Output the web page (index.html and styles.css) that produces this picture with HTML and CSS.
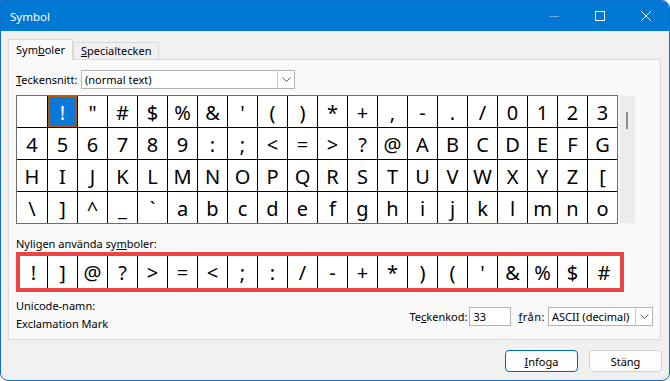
FILE: index.html
```html
<!DOCTYPE html>
<html lang="sv">

<head>
    <meta charset="UTF-8">
    <meta name="viewport" content="width=device-width, initial-scale=1.0">
    <title>Symbol</title>
    <link rel="stylesheet" href="styles.css">
</head>

<body>
    <div class="window">
        <div class="titlebar">
            <span class="title">Symbol</span>
            <div class="controls">
                <span class="ctrl">
                    <svg width="12" height="12" viewBox="0 0 12 12"><path d="M1 6.5 H11" stroke="#6fa9e4" stroke-width="1" /></svg>
                </span>
                <span class="ctrl">
                    <svg width="12" height="12" viewBox="0 0 12 12"><rect x="1.5" y="1.5" width="9" height="9" fill="none" stroke="#fff" stroke-width="1" /></svg>
                </span>
                <span class="ctrl">
                    <svg width="12" height="12" viewBox="0 0 12 12"><path d="M1 1 L11 11 M11 1 L1 11" stroke="#fff" stroke-width="1" /></svg>
                </span>
            </div>
        </div>

        <div class="content">
            <div class="tabs">
                <div class="tab active">Sym<u>b</u>oler</div>
                <div class="tab"><u>S</u>pecialtecken</div>
            </div>

            <div class="panel">
                <div class="font-row">
                    <span class="font-label"><u>T</u>eckensnitt:</span>
                    <div class="select font-select">
                        <span>(normal text)</span>
                        <span class="drop">
                            <svg width="9" height="6" viewBox="0 0 9 6"><path d="M0.5 0.5 L4.5 4.5 L8.5 0.5" fill="none" stroke="#606060" stroke-width="1" /></svg>
                        </span>
                    </div>
                </div>

                <div class="grid-row">
                    <div class="grid" id="grid"></div>
                    <div class="scrollbar">
                        <div class="thumb"></div>
                    </div>
                </div>

                <div class="recent-label">Nyligen använda sy<u>m</u>boler:</div>
                <div class="recent" id="recent"></div>

                <div class="info-row">
                    <div class="names">
                        <div>Unicode-namn:</div>
                        <div>Exclamation Mark</div>
                    </div>
                    <div class="code">
                        <span class="code-label">Te<u>c</u>kenkod:</span>
                        <div class="input">33</div>
                        <span class="from-label"><u>f</u>rån:</span>
                        <div class="select from-select">
                            <span>ASCII (decimal)</span>
                            <span class="drop">
                                <svg width="9" height="6" viewBox="0 0 9 6"><path d="M0.5 0.5 L4.5 4.5 L8.5 0.5" fill="none" stroke="#606060" stroke-width="1" /></svg>
                            </span>
                        </div>
                    </div>
                </div>
            </div>

            <div class="buttons">
                <button class="btn primary"><u>I</u>nfoga</button>
                <button class="btn">Stäng</button>
            </div>
        </div>
    </div>

    <script>
        const rows = [
            " !\"#$%&'()*+,-./0123",
            "456789:;<=>?@ABCDEFG",
            "HIJKLMNOPQRSTUVWXYZ[",
            "\\]^_`abcdefghijklmno"
        ];
        const recentChars = "!]@?>=<;:/-+*)('&%$#";

        const grid = document.getElementById("grid");
        const recent = document.getElementById("recent");

        const makeCell = (ch) => {
            let cell = document.createElement("div");
            cell.classList.add("cell");
            cell.textContent = ch;
            return cell;
        };

        rows.forEach((row, r) => {
            [...row].forEach((ch, c) => {
                let cell = makeCell(ch);
                if (r === 0 && c === 1) {
                    cell.classList.add("selected");
                }
                grid.appendChild(cell);
            });
        });

        [...recentChars].forEach((ch) => {
            recent.appendChild(makeCell(ch));
        });
    </script>
</body>

</html>
```

FILE: styles.css
```css
* {
    box-sizing: border-box;
}

body {
    margin: 0;
    font-family: "Noto Sans", sans-serif;
    font-size: 11px;
    color: #000;
    background-color: #fff;
}

u {
    text-underline-offset: 1px;
}

.window {
    width: 670px;
    height: 381px;
    border: 1px solid #0a6fce;
    border-radius: 0 8px 8px 8px;
    background-color: #f0f0f0;
    overflow: hidden;
    display: flex;
    flex-direction: column;
}

.titlebar {
    height: 30px;
    flex-shrink: 0;
    background-color: #0078d4;
    color: white;
    display: flex;
    align-items: center;
}

.title {
    padding-left: 9px;
    font-size: 11.5px;
}

.controls {
    margin-left: auto;
    display: flex;
    height: 100%;
}

.ctrl {
    width: 46px;
    display: flex;
    align-items: center;
    justify-content: center;
}

.content {
    padding: 8px 8px 0 7px;
    display: flex;
    flex-direction: column;
}

.tabs {
    display: flex;
    align-items: flex-end;
    height: 20px;
}

.tab {
    height: 17px;
    padding: 0 7px;
    line-height: 16px;
    border: 1px solid #d9d9d9;
    border-bottom: none;
    background-color: #f0f0f0;
}

.tab.active {
    height: 21px;
    margin-bottom: -1px;
    padding: 2px 7px 0 7px;
    background-color: #f9f9f9;
    position: relative;
    z-index: 1;
}

.panel {
    height: 281px;
    border: 1px solid #d9d9d9;
    background-color: #f9f9f9;
    padding: 10px 7px 0 7px;
}

.font-row {
    display: flex;
    align-items: center;
    height: 19px;
}

.font-label {
    width: 65px;
}

.select {
    height: 19px;
    border: 1px solid #b4b4b4;
    background-color: white;
    display: flex;
    align-items: center;
    padding-left: 3px;
}

.font-select {
    width: 214px;
}

.from-select {
    width: 105px;
}

.drop {
    margin-left: auto;
    width: 17px;
    height: 17px;
    border-left: 1px solid #c8c8c8;
    display: flex;
    align-items: center;
    justify-content: center;
}

.grid-row {
    display: flex;
    margin-top: 6px;
}

.grid {
    display: grid;
    grid-template-columns: 30px repeat(19, 29px);
    grid-auto-rows: 31px;
    gap: 1px;
    background-color: #000;
    border: 1px solid #6e6e6e;
}

.cell {
    background-color: white;
    display: flex;
    align-items: center;
    justify-content: center;
    font-size: 20px;
    line-height: 1;
    padding-top: 2px;
}

.cell.selected {
    background-color: #0a78d8;
    color: white;
    outline: 1px dotted #c4660e;
    outline-offset: -1px;
}

.scrollbar {
    width: 17px;
    height: 129px;
    margin-left: 1px;
    background-color: #ececec;
    border: 1px solid #f4f4f4;
}

.thumb {
    width: 2px;
    height: 17px;
    margin: 16px 0 0 6px;
    background-color: #8c8c8c;
}

.recent-label {
    margin-top: 12px;
    height: 16px;
    line-height: 16px;
}

.recent {
    width: 608px;
    border: 4px solid #ee4343;
    display: grid;
    grid-template-columns: 27px repeat(18, 29px) 1fr;
    grid-auto-rows: 32px;
    gap: 1px;
    background-color: #000;
}

.info-row {
    display: flex;
    margin-top: 6px;
}

.names {
    display: flex;
    flex-direction: column;
    gap: 2px;
    line-height: 16px;
}

.code {
    margin-left: auto;
    margin-top: 9px;
    display: flex;
    align-items: center;
    align-self: flex-start;
}

.code-label {
    margin-right: 2px;
}

.input {
    width: 42px;
    height: 19px;
    border: 1px solid #b4b4b4;
    background-color: white;
    padding-left: 3px;
    line-height: 17px;
}

.from-label {
    margin: 0 3px 0 7px;
    letter-spacing: 0.5px;
}

.buttons {
    display: flex;
    justify-content: flex-end;
    gap: 11px;
    margin-top: 10px;
    margin-right: -1px;
}

.btn {
    width: 73px;
    height: 22px;
    font-family: "Noto Sans", sans-serif;
    font-size: 11px;
    background-color: #fdfdfd;
    border: 1px solid #d0d0d0;
    border-radius: 4px;
    padding: 0;
    color: #000;
}

.btn.primary {
    border-color: #0067c0;
}
```
